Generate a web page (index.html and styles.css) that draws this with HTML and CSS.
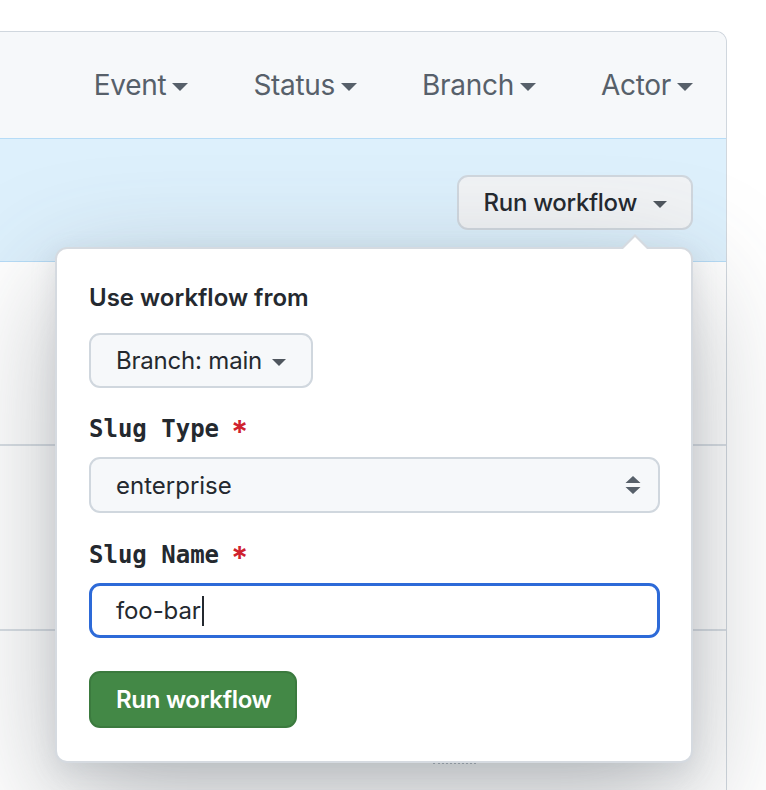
FILE: index.html
```html
<!DOCTYPE html>
<html lang="en">
<head>
<meta charset="utf-8">
<title>Run workflow</title>
<link rel="stylesheet" href="styles.css">
</head>
<body>
<div class="box">
  <div class="box-header">
    <span class="filter">Event <i class="caret"></i></span>
    <span class="filter">Status <i class="caret"></i></span>
    <span class="filter">Branch <i class="caret"></i></span>
    <span class="filter">Actor <i class="caret"></i></span>
  </div>
  <div class="banner">
    <button class="btn">Run workflow <i class="caret caret-dark"></i></button>
  </div>
  <div class="row row1"></div>
  <div class="row row2"></div>
  <div class="row row3">
    <span class="peek-dash"></span><span class="peek-dots"></span>
  </div>
</div>

<div class="popover">
  <div class="pop-title">Use workflow from</div>
  <button class="btn btn-branch">Branch: main <i class="caret caret-dark"></i></button>

  <div class="field field-first">
    <div class="label">Slug Type<span class="req">*</span></div>
    <div class="select">
      <span>enterprise</span>
      <svg class="updown" width="16" height="18" viewBox="0 0 16 18"><path d="M8 0 L15.5 7 H0.5 Z M0.5 11 H15.5 L8 18 Z" fill="#57606a"/></svg>
    </div>
  </div>

  <div class="field">
    <div class="label">Slug Name<span class="req">*</span></div>
    <div class="input">foo-bar<span class="cursor"></span></div>
  </div>

  <button class="btn-primary">Run workflow</button>
</div>
</body>
</html>
```

FILE: styles.css
```css
html, body {
  margin: 0;
  padding: 0;
  height: 100%;
  background: #ffffff;
  overflow: hidden;
}

body {
  font-family: Inter, "Liberation Sans", sans-serif;
  color: #24292f;
  position: relative;
}

.box {
  margin-top: 31px;
  margin-left: -12px;
  width: 737px;
  border: 1px solid #d0d7de;
  border-top-right-radius: 11px;
  border-bottom: none;
  height: 800px;
  overflow: hidden;
}

.box-header {
  height: 106px;
  background: #f6f8fa;
  display: flex;
  justify-content: flex-end;
  align-items: center;
  gap: 65px;
  padding-right: 33px;
  box-sizing: border-box;
}

.filter {
  font-size: 28px;
  color: #57606a;
  display: inline-flex;
  align-items: center;
  gap: 6px;
  letter-spacing: -0.3px;
}

.caret {
  display: inline-block;
  width: 0;
  height: 0;
  border-left: 7px solid transparent;
  border-right: 7px solid transparent;
  border-top: 7px solid #57606a;
  margin-top: 3px;
}

.filter .caret {
  border-left-width: 8px;
  border-right-width: 8px;
  border-top-width: 8px;
}

.caret-dark {
  border-top-color: #4f565e;
}

.banner {
  height: 124px;
  background: #ddf0fc;
  border-top: 1px solid #b6dcf7;
  border-bottom: 1px solid #b6dcf7;
  display: flex;
  justify-content: flex-end;
  align-items: flex-start;
  padding-top: 36px;
  padding-right: 33px;
  box-sizing: border-box;
}

.btn {
  font-family: Inter, "Liberation Sans", sans-serif;
  font-size: 24px;
  font-weight: 500;
  color: #24292f;
  background: #f1f3f5;
  border: 2px solid #d0d7de;
  border-radius: 11px;
  height: 55px;
  padding: 0 24px 0 25px;
  display: inline-flex;
  align-items: center;
  gap: 16px;
  letter-spacing: -0.3px;
}

.row {
  background: #ffffff;
  border-bottom: 2px solid #d8dee4;
}

.row1 { height: 182px; }
.row2 { height: 183px; }
.row3 {
  height: 300px;
  border-bottom: none;
  display: flex;
  align-items: flex-start;
  padding-top: 129px;
  padding-left: 415px;
  box-sizing: border-box;
  gap: 19px;
}

.peek-dash {
  display: block;
  width: 10px;
  height: 2px;
  background: #6e7781;
}

.peek-dots {
  display: block;
  width: 43px;
  margin-top: 2px;
  border-top: 2px dotted #a8b0b8;
}

.popover {
  position: absolute;
  left: 55px;
  top: 247px;
  width: 638px;
  box-sizing: border-box;
  padding: 33px 31px 33px 32px;
  background: #ffffff;
  border: 2px solid #d5dae0;
  border-radius: 12px;
  box-shadow: 0 8px 24px rgba(140, 149, 159, 0.22), 0 40px 120px rgba(70, 78, 88, 0.38);
}

.popover::before {
  content: "";
  position: absolute;
  left: 563px;
  top: -15px;
  border-left: 15px solid transparent;
  border-right: 15px solid transparent;
  border-bottom: 15px solid #d5dae0;
}

.popover::after {
  content: "";
  position: absolute;
  left: 565px;
  top: -12px;
  border-left: 13px solid transparent;
  border-right: 13px solid transparent;
  border-bottom: 13px solid #ffffff;
}

.pop-title {
  font-size: 24px;
  line-height: 36px;
  font-weight: 600;
  margin-top: -2px;
}

.btn-branch {
  margin-top: 17px;
  background: #f6f8fa;
  font-weight: 400;
  height: 55px;
  padding: 0 25px 0 25px;
  gap: 10px;
  letter-spacing: -0.2px;
}

.field {
  margin-top: 24px;
}

.field-first {
  margin-top: 23px;
}

.label {
  font-family: "DejaVu Sans Mono", "Liberation Mono", monospace;
  font-weight: bold;
  font-size: 24px;
  line-height: 36px;
  color: #24292f;
  margin-bottom: 10px;
}

.req {
  color: #cf222e;
  font-family: Inter, "Liberation Sans", sans-serif;
  font-weight: 600;
  font-size: 32px;
  line-height: 0;
  vertical-align: -7px;
  margin-left: 12px;
}

.select {
  height: 56px;
  box-sizing: border-box;
  background: #f6f8fa;
  border: 2px solid #d0d7de;
  border-radius: 11px;
  display: flex;
  align-items: center;
  justify-content: space-between;
  padding: 0 17px 0 25px;
  font-size: 24px;
}

.updown {
  display: block;
}

.input {
  margin-top: 8px;
  height: 55px;
  box-sizing: border-box;
  border: 3px solid #2d6ad8;
  border-radius: 11px;
  display: flex;
  align-items: center;
  padding: 0 0 0 24px;
  font-size: 24px;
  letter-spacing: -0.1px;
}

.cursor {
  display: inline-block;
  width: 2px;
  height: 30px;
  background: #24292f;
  margin-left: 1px;
}

.btn-primary {
  margin-top: 33px;
  font-family: Inter, "Liberation Sans", sans-serif;
  font-size: 24px;
  font-weight: 600;
  color: #ffffff;
  background: #438846;
  border: 2px solid #3b7a3e;
  border-radius: 11px;
  height: 57px;
  padding: 0 24px 0 25px;
  letter-spacing: -0.3px;
  display: block;
}
```
